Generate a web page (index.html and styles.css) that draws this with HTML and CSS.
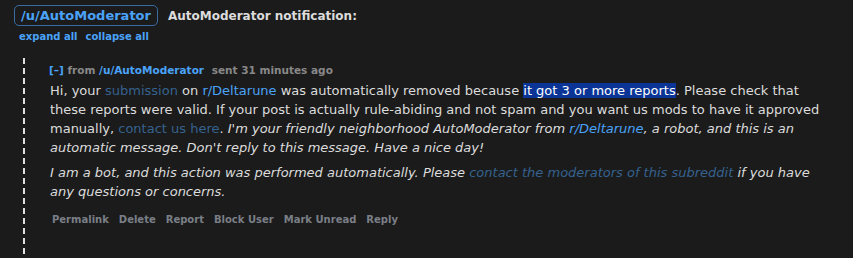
FILE: index.html
```html
<!DOCTYPE html>
<html>
<head>
<meta charset="utf-8">
<link rel="stylesheet" href="styles.css">
</head>
<body>
<div class="page">
  <div class="top">
    <span class="badge">/u/AutoModerator</span>
    <span class="title">AutoModerator notification:</span>
  </div>
  <div class="toggles">
    <a class="lnk">expand all</a>
    <a class="lnk">collapse all</a>
  </div>
  <div class="thread">
    <div class="msg">
      <div class="meta">
        <span class="lnk">[–]</span>
        <span class="dim">from</span>
        <span class="lnk">/u/AutoModerator</span>
        <span class="dim sent">sent 31 minutes ago</span>
      </div>
      <div class="body">
        <p>Hi, your <a class="vis">submission</a> on <a class="bright">r/Deltarune</a> was automatically removed because <span class="sel">it got 3 or more reports</span>. Please check that these reports were valid. If your post is actually rule-abiding and not spam and you want us mods to have it approved manually, <a class="vis">contact us here</a>. <em>I'm your friendly neighborhood AutoModerator from <a class="bright">r/Deltarune</a>, a robot, and this is an automatic message. Don't reply to this message. Have a nice day!</em></p>
        <p><em>I am a bot, and this action was performed automatically. Please <a class="vis">contact the moderators of this subreddit</a> if you have any questions or concerns.</em></p>
      </div>
      <div class="actions">
        <span>Permalink</span>
        <span>Delete</span>
        <span>Report</span>
        <span>Block User</span>
        <span>Mark Unread</span>
        <span>Reply</span>
      </div>
    </div>
  </div>
</div>
</body>
</html>
```
FILE: styles.css
```css
html, body {
  margin: 0;
  background: #1b1b1b;
  height: 100%;
}
body {
  font-family: "DejaVu Sans", Verdana, sans-serif;
  color: #dcdcdc;
}
.page {
  padding: 5px 0 0 14px;
}
.top {
  display: flex;
  align-items: center;
  gap: 10px;
}
.badge {
  border: 1px solid #3a6ca3;
  border-radius: 5px;
  padding: 1px 6px;
  font-weight: bold;
  font-size: 13px;
  line-height: 17px;
  color: #4aa3f8;
}
.title {
  font-weight: bold;
  font-size: 12px;
  color: #dcdcdc;
}
.toggles {
  display: flex;
  gap: 8px;
  margin-top: 5px;
  padding-left: 5px;
  font-size: 10px;
  font-weight: bold;
  line-height: 12px;
}
.lnk {
  color: #4aa3f8;
}
.thread {
  margin: 15px 0 0 9px;
  padding: 6px 0 30px 26px;
  background: repeating-linear-gradient(to bottom, #e0e0e0 0 6px, transparent 6px 10px) left top / 2px 100% no-repeat;
}
.meta {
  font-size: 10.5px;
  font-weight: bold;
  line-height: 12px;
}
.dim {
  color: #888;
}
.sent {
  margin-left: 4px;
}
.body {
  margin-left: 1px;
  max-width: 770px;
  font-size: 13px;
  line-height: 19px;
}
.body p {
  margin: 5px 0 6px;
}
.vis {
  color: #35628f;
}
.bright {
  color: #4aa3f8;
}
.sel {
  background: #0a3597;
  color: #fff;
}
.actions {
  display: flex;
  gap: 10px;
  margin: 13px 0 0 3px;
  font-size: 10px;
  font-weight: bold;
  color: #7a7f87;
}
```
